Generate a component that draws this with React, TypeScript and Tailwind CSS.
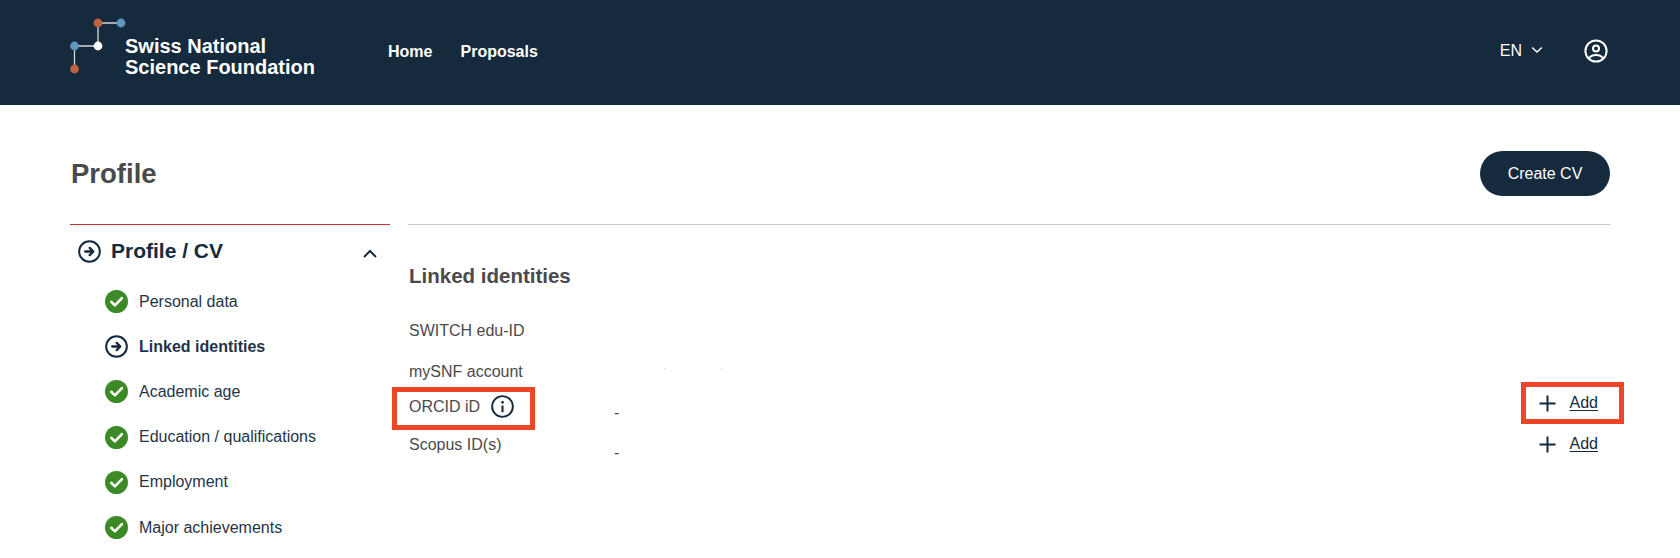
import React from "react";

const navy = "#152a3d";

function ArrowCircle({ size = 23 }: { size?: number }) {
  return (
    <svg width={size} height={size} viewBox="0 0 24 24" fill="none" stroke={navy} className="shrink-0">
      <circle cx="12" cy="12" r="10.8" strokeWidth="2.1" />
      <path d="M7.5 12h8.2M12.2 8.2l3.8 3.8-3.8 3.8" strokeWidth="2.4" strokeLinecap="round" strokeLinejoin="round" />
    </svg>
  );
}

function Check() {
  return (
    <svg width="23" height="23" viewBox="0 0 23 23" className="shrink-0">
      <circle cx="11.5" cy="11.5" r="11.5" fill="#3c8a26" />
      <path d="M6.2 11.8l3.7 3.6 7-7.2" fill="none" stroke="#fff" strokeWidth="2.6" strokeLinecap="round" strokeLinejoin="round" />
    </svg>
  );
}

function Plus() {
  return (
    <svg width="17" height="17" viewBox="0 0 17 17" fill="none" stroke={navy} strokeWidth="2" className="shrink-0">
      <path d="M8.5 0.5v16M0.5 8.5h16" />
    </svg>
  );
}

function Logo() {
  return (
    <svg width="60" height="60" viewBox="0 0 60 60" className="shrink-0">
      <path d="M8.5 52V29H32V6h23" fill="none" stroke="#d5dadd" strokeWidth="1.3" />
      <circle cx="32" cy="6" r="4.4" fill="#bf6244" />
      <circle cx="55" cy="6" r="4.4" fill="#5f97bd" />
      <circle cx="8.5" cy="29" r="4.4" fill="#5f97bd" />
      <circle cx="32" cy="29" r="4.4" fill="#ffffff" />
      <circle cx="8.5" cy="52" r="4.4" fill="#bf6244" />
    </svg>
  );
}

const items = ["Personal data", "Linked identities", "Academic age", "Education / qualifications", "Employment", "Major achievements"];

export default function App() {
  return (
    <div className="h-[558px] overflow-hidden bg-white font-['Liberation_Sans',Arial,sans-serif]">
      <header className="flex h-[105px] items-center bg-[#152a3d] pb-[2px] pl-[66px] pr-[72px] text-white">
        <div className="flex items-start self-start pt-[17px]">
          <Logo />
          <div className="mt-[19px] ml-[-1px] text-[20px] leading-[21px] font-bold">
            <div>Swiss National</div>
            <div>Science Foundation</div>
          </div>
        </div>
        <nav className="ml-[73px] flex gap-[28px] text-[16px] font-bold">
          <span>Home</span>
          <span>Proposals</span>
        </nav>
        <div className="mb-[1px] ml-auto flex items-center">
          <span className="text-[16px]">EN</span>
          <svg width="12" height="8" viewBox="0 0 12 8" fill="none" stroke="#fff" strokeWidth="1.5" className="mb-[3px] ml-[9px]">
            <path d="M1.2 1.5L6 6l4.8-4.5" />
          </svg>
          <svg width="24" height="24" viewBox="0 0 24 24" fill="none" stroke="#fff" strokeWidth="2" className="ml-[41px]">
            <circle cx="12" cy="12" r="10.6" />
            <circle cx="12" cy="9.5" r="3" />
            <path d="M4.8 19.5c1.6-2.6 4.2-3.6 7.2-3.6s5.6 1 7.2 3.6" />
          </svg>
        </div>
      </header>

      <main className="px-[70px] pt-[46px]">
        <div className="flex h-[45px] items-center justify-between">
          <h1 className="ml-px text-[27.5px] font-bold text-[#4a4a4a]">Profile</h1>
          <button className="h-[45px] w-[130px] rounded-full bg-[#152a3d] text-[16px] text-white">Create CV</button>
        </div>

        <div className="mt-[28px] flex gap-[18px]">
          <aside className="w-[320px] shrink-0 border-t border-[#c9303a]">
            <div className="flex h-[52px] items-center pl-[8px] pr-[13px]">
              <ArrowCircle />
              <span className="ml-[10px] text-[21px] font-bold text-[#152a3d]">Profile / CV</span>
              <svg width="14" height="10" viewBox="0 0 14 10" fill="none" stroke={navy} strokeWidth="2" className="mt-[6px] ml-auto">
                <path d="M1 8l6-6 6 6" />
              </svg>
            </div>
            <ul className="mt-[2px] pl-[35px]">
              {items.map((t, i) => (
                <li key={t} className="flex h-[45.2px] items-center gap-[11px] text-[16px] text-[#1f3447]">
                  {i === 1 ? <ArrowCircle /> : <Check />}
                  <span className={i === 1 ? "font-bold" : ""}>{t}</span>
                </li>
              ))}
            </ul>
          </aside>

          <section className="min-w-0 flex-1 border-t border-[#c8c8c8] text-[16px] text-[#4a4a4a]">
            <h2 className="mt-[38px] ml-px text-[20.5px] leading-[26px] font-bold">Linked identities</h2>
            <div className="mt-[30px] ml-px">
              <div className="h-[41px] leading-[24px]">SWITCH edu-ID</div>
              <div className="relative h-[35px] leading-[24px]">
                mySNF account
                <span className="absolute top-[8px] left-[255px] h-px w-px bg-[#c8c8c8]" />
                <span className="absolute top-[8px] left-[312px] h-px w-px bg-[#c8c8c8]" />
              </div>
              <div className="relative flex h-[38px] items-start leading-[24px]">
                <span className="w-[82px] shrink-0">ORCID iD</span>
                <svg width="23" height="23" viewBox="0 0 24 24" fill="none" stroke={navy} className="shrink-0">
                  <circle cx="12" cy="12" r="10.8" strokeWidth="2" />
                  <circle cx="12" cy="7.6" r="1.4" fill={navy} stroke="none" />
                  <path d="M12 11v7" strokeWidth="2.2" />
                </svg>
                <span className="absolute top-[6px] left-[205px]">-</span>
                <div className="mt-[-4px] mr-[12px] ml-auto flex items-center gap-[14px] text-[#152a3d]">
                  <Plus />
                  <span className="underline underline-offset-2">Add</span>
                </div>
                <span className="absolute top-[-8px] left-[-17px] h-[43px] w-[143px] border-[5px] border-[#ee4427]" />
                <span className="absolute top-[-13px] right-[-14px] h-[42px] w-[103px] border-[5px] border-[#ee4427]" />
              </div>
              <div className="relative flex h-[24px] items-start leading-[24px]">
                <span>Scopus ID(s)</span>
                <span className="absolute top-[8px] left-[205px]">-</span>
                <div className="mt-[-1px] mr-[12px] ml-auto flex items-center gap-[14px] text-[#152a3d]">
                  <Plus />
                  <span className="underline underline-offset-2">Add</span>
                </div>
              </div>
            </div>
          </section>
        </div>
      </main>
    </div>
  );
}
